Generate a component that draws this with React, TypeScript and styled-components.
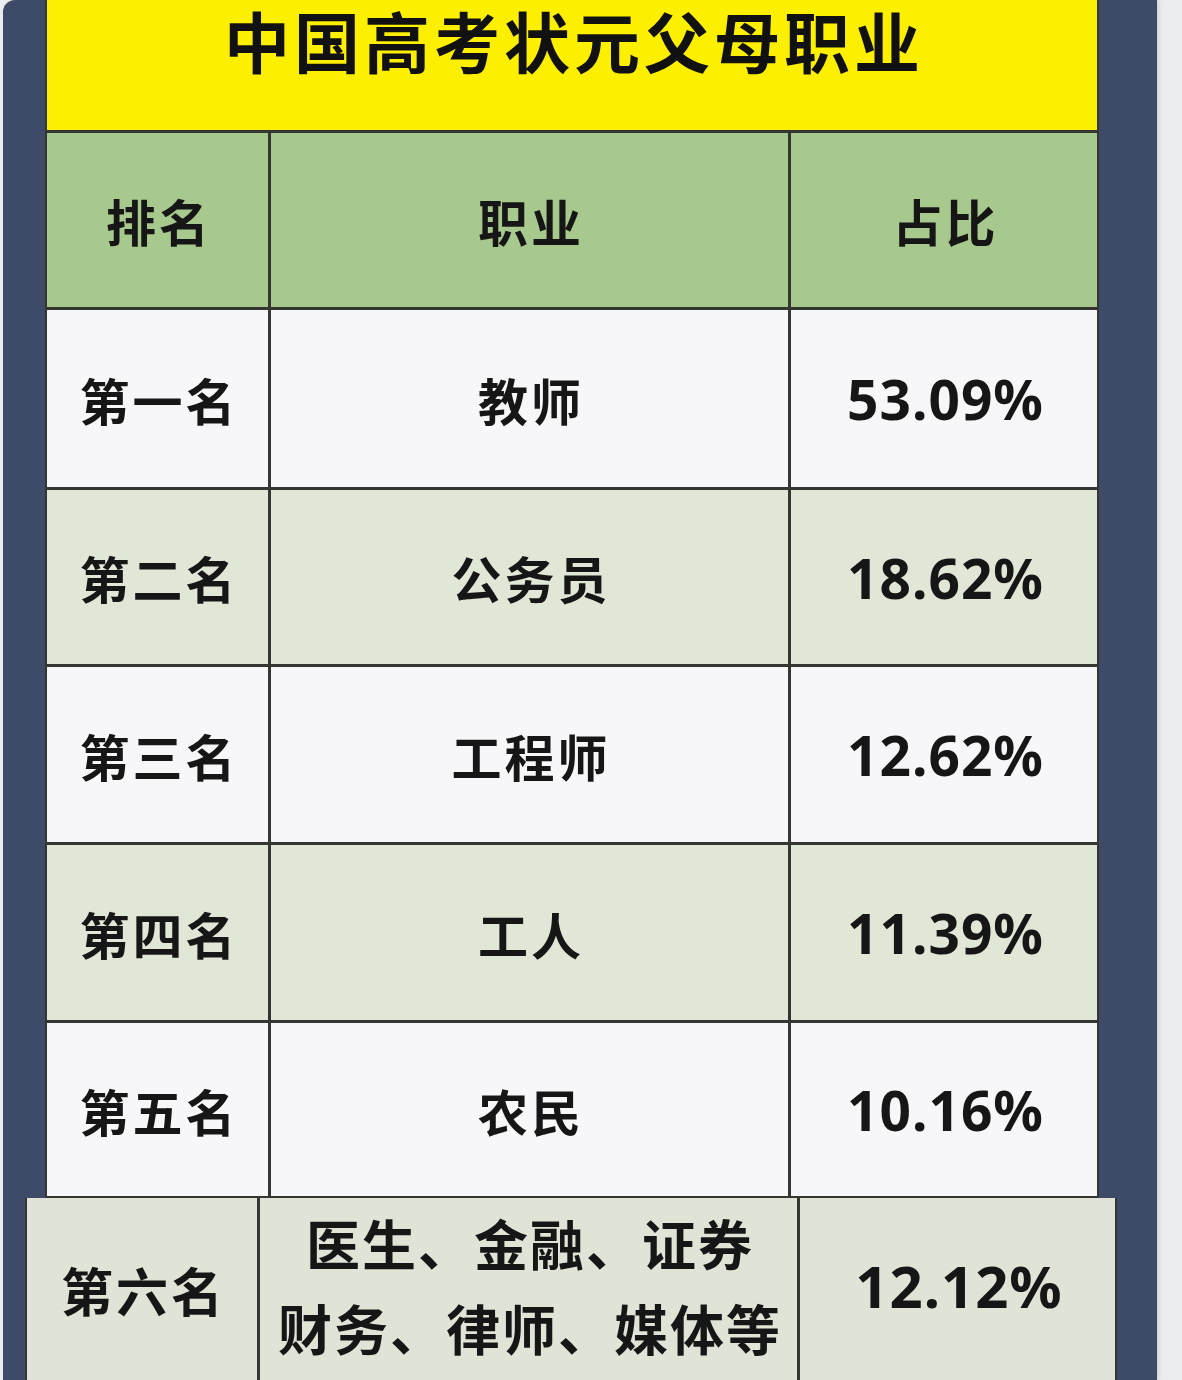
import styled, { createGlobalStyle } from "styled-components";

interface IRankRow {
    rank: string;
    job: string;
    ratio: string;
    shade: boolean;
}

const rows: IRankRow[] = [
    { rank: "第一名", job: "教师", ratio: "53.09%", shade: false },
    { rank: "第二名", job: "公务员", ratio: "18.62%", shade: true },
    { rank: "第三名", job: "工程师", ratio: "12.62%", shade: false },
    { rank: "第四名", job: "工人", ratio: "11.39%", shade: true },
    { rank: "第五名", job: "农民", ratio: "10.16%", shade: false },
];

const cjk = `"Noto Sans CJK SC", "Noto Sans", sans-serif`;

const GlobalStyle = createGlobalStyle`
    html, body {
        margin: 0;
        padding: 0;
        background: #ecedf1;
    }
    #root {
        width: 1182px;
        height: 1380px;
        overflow: hidden;
    }
`;

const Frame = styled.div`
    width: 1154px;
    height: 1380px;
    margin-left: 3px;
    padding: 0 60px 0 42px;
    box-sizing: border-box;
    background: #3d4b68;
    border-top-left-radius: 12px;
    box-shadow: 2px 0 4px rgba(0, 0, 0, 0.12);
    display: flex;
    flex-direction: column;
`;

const Table = styled.div`
    width: 1050px;
    display: grid;
    grid-template-columns: 221px 517px 1fr;
    grid-template-rows: 130px 174px 177px 174px 175px 175px 173px;
    gap: 3px;
    background: #333631;
    border-left: 2px solid #333631;
    border-right: 2px solid #333631;
    border-bottom: 2px solid #333631;
`;

const Title = styled.div`
    grid-column: 1 / 4;
    background: #fcef00;
    display: flex;
    justify-content: center;
    align-items: flex-start;
    padding-top: 5px;
    padding-left: 4px;
    box-sizing: border-box;
    font-family: ${cjk};
    font-weight: 700;
    font-size: 66px;
    line-height: 1.05;
    letter-spacing: 4px;
    color: #111;
`;

const Cell = styled.div<{ $bg: string }>`
    background: ${props => props.$bg};
    display: flex;
    justify-content: center;
    align-items: center;
    font-family: ${cjk};
    font-weight: 700;
    font-size: 50px;
    letter-spacing: 3px;
    padding-left: 3px;
    color: #161616;
`;

const Ratio = styled(Cell)`
    font-family: "Noto Sans", "Open Sans", sans-serif;
    font-size: 55px;
    letter-spacing: 1px;
`;

const LastRow = styled.div`
    margin: 0 -20px;
    height: 190px;
    display: grid;
    grid-template-columns: 230px 537px 1fr;
    gap: 3px;
    background: #333631;
    border-left: 2px solid #333631;
    border-right: 2px solid #333631;
`;

const LastCell = styled(Cell)`
    font-size: 52px;
    letter-spacing: 3px;
`;

const JobLines = styled(Cell)`
    flex-direction: column;
    font-size: 54px;
    line-height: 85px;
    letter-spacing: 2px;
    padding-bottom: 8px;
`;

const LastRatio = styled(Ratio)`
    font-size: 58px;
    padding-bottom: 8px;
`;

function App() {
    return <>
        <GlobalStyle />
        <Frame>
            <Table>
                <Title>中国高考状元父母职业</Title>
                <Cell $bg="#a8c98e">排名</Cell>
                <Cell $bg="#a8c98e">职业</Cell>
                <Cell $bg="#a8c98e">占比</Cell>
                {rows.map(row => {
                    const bg = row.shade ? "#e1e7d7" : "#f7f7f9";
                    return [
                        <Cell key={row.rank + "r"} $bg={bg}>{row.rank}</Cell>,
                        <Cell key={row.rank + "j"} $bg={bg}>{row.job}</Cell>,
                        <Ratio key={row.rank + "p"} $bg={bg}>{row.ratio}</Ratio>,
                    ];
                })}
            </Table>
            <LastRow>
                <LastCell $bg="#dfe4d6">第六名</LastCell>
                <JobLines $bg="#dfe4d6">
                    <span>医生、金融、证券</span>
                    <span>财务、律师、媒体等</span>
                </JobLines>
                <LastRatio $bg="#dfe4d6">12.12%</LastRatio>
            </LastRow>
        </Frame>
    </>
}

export default App;
